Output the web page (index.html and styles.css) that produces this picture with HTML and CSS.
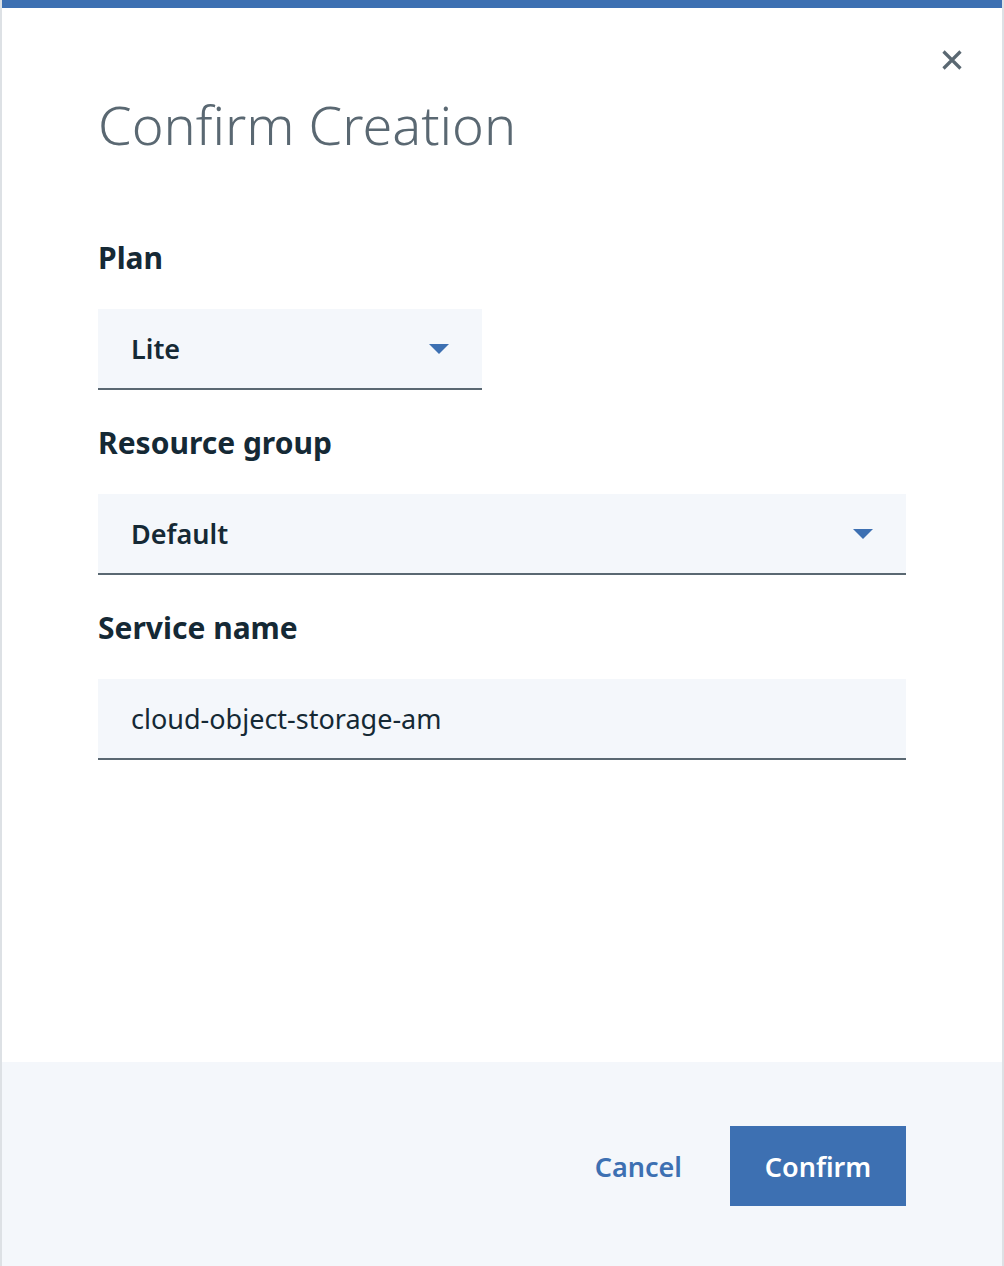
FILE: index.html
```html
<!DOCTYPE html>
<html>
<head>
<meta charset="utf-8">
<link rel="stylesheet" href="styles.css">
</head>
<body>
<div class="modal">
  <div class="topbar"></div>
  <div class="body">
    <button class="close" aria-label="Close">
      <svg width="20" height="20" viewBox="0 0 20 20"><path d="M1.5 1.5 L18.5 18.5 M18.5 1.5 L1.5 18.5" stroke="#5a6872" stroke-width="3.2" fill="none"/></svg>
    </button>
    <h1 class="title">Confirm Creation</h1>
    <div class="field">
      <label class="label">Plan</label>
      <div class="select small"><span>Lite</span><span class="caret"></span></div>
    </div>
    <div class="field">
      <label class="label">Resource group</label>
      <div class="select"><span>Default</span><span class="caret"></span></div>
    </div>
    <div class="field">
      <label class="label">Service name</label>
      <div class="input">cloud-object-storage-am</div>
    </div>
  </div>
  <div class="footer">
    <button class="btn-link">Cancel</button>
    <button class="btn-primary">Confirm</button>
  </div>
</div>
</body>
</html>
```
FILE: styles.css
```css
html, body { margin: 0; padding: 0; }
body {
  background: #dde1e5;
  font-family: "Noto Sans", "Open Sans", sans-serif;
  width: 1004px;
  height: 1266px;
  overflow: hidden;
}
.modal {
  margin: 0 2px;
  height: 1266px;
  background: #ffffff;
  display: flex;
  flex-direction: column;
  position: relative;
}
.topbar { height: 8px; background: #3d70b2; flex: none; }
.body { flex: 1; padding: 0 96px; position: relative; }
.close {
  position: absolute;
  top: 42px; right: 40px;
  border: 0; background: none; padding: 0; width: 20px; height: 20px;
}
.close svg { display: block; }
.title {
  margin: 81px 0 0 0;
  font-weight: 300;
  font-size: 54px;
  line-height: 70px;
  color: #5a6872;
  letter-spacing: 0;
}
.label {
  display: block;
  font-weight: 700;
  font-size: 30px;
  line-height: 40px;
  color: #152935;
  margin-top: 79px;
}
.field + .field .label { margin-top: 33px; }
.select, .input {
  margin-top: 31px;
  height: 79px;
  background: #f4f7fb;
  border-bottom: 2px solid #5a6872;
  display: flex;
  align-items: center;
  padding: 0 33px;
  font-size: 27px;
  color: #152935;
}
.select { font-weight: 600; justify-content: space-between; }
.select.small { width: 318px; }
.caret {
  width: 0; height: 0;
  border-left: 10px solid transparent;
  border-right: 10px solid transparent;
  border-top: 10px solid #3d70b2;
}
.input { font-weight: 400; }
.footer {
  flex: none;
  height: 204px;
  box-sizing: border-box;
  padding-top: 4px;
  background: #f4f7fb;
  display: flex;
  justify-content: flex-end;
  align-items: center;
  padding-right: 96px;
  gap: 48px;
}
.btn-link {
  border: 0; background: none; padding: 0;
  font-family: inherit; font-size: 27px; font-weight: 600;
  color: #3d70b2;
}
.btn-primary {
  border: 0; background: #3d70b2; color: #ffffff;
  width: 176px; height: 80px;
  font-family: inherit; font-size: 27px; font-weight: 600;
}
```
